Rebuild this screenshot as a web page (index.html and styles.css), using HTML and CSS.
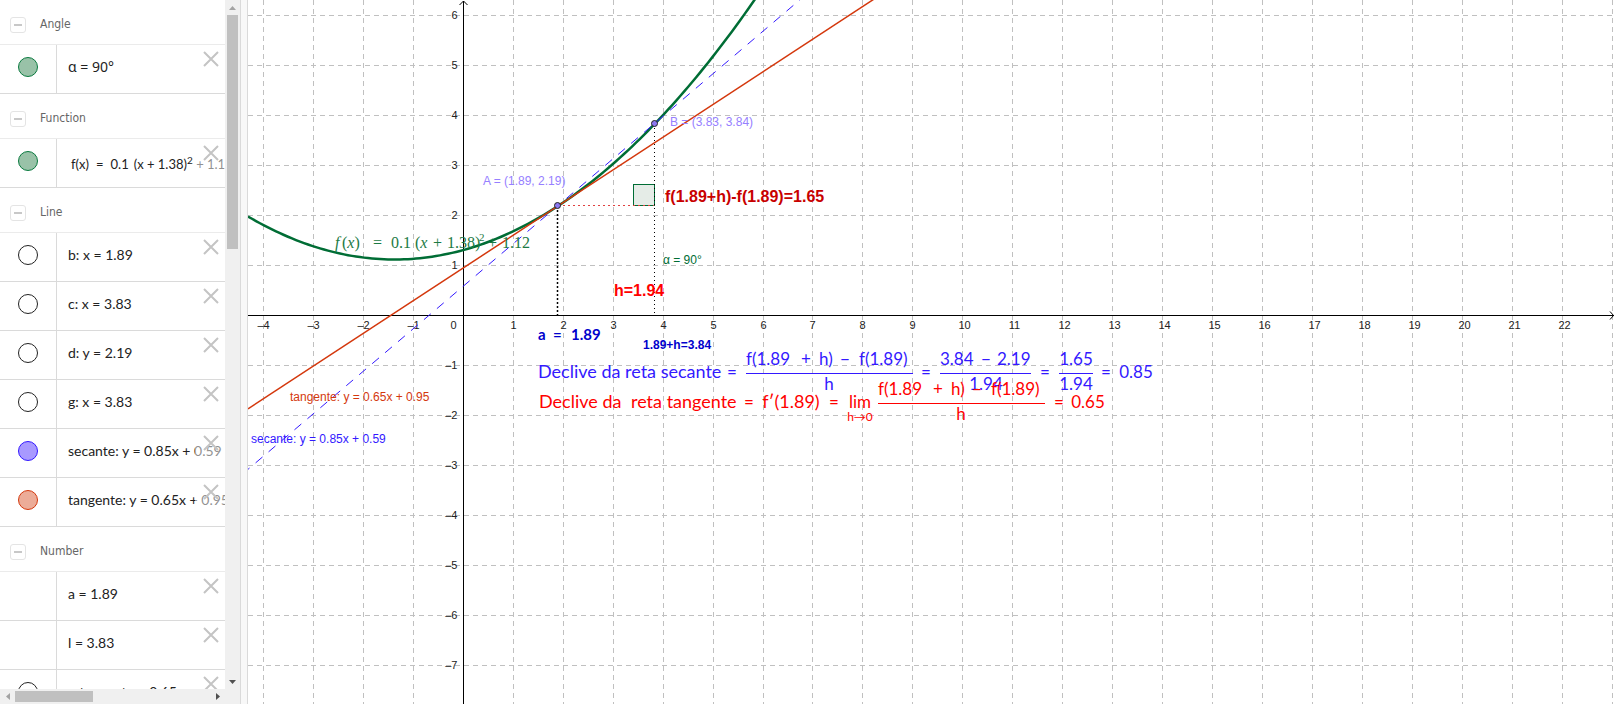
FILE: index.html
```html
<!DOCTYPE html>
<html lang="pt">
<head>
<meta charset="utf-8">
<title>Declive da reta tangente</title>
<link rel="stylesheet" href="styles.css">
</head>
<body>
<svg class="defs" width="0" height="0" aria-hidden="true">
  <symbol id="close" viewBox="0 0 16 16"><path d="M1 1L15 15M15 1L1 15" fill="none" stroke="#c4c4c4" stroke-width="2"/></symbol>
</svg>
<main class="app">
  <aside class="algebra">
    <div class="list">
      <section>
        <h2 class="group"><button class="toggle" aria-label="Collapse Angle"></button>Angle</h2>
        <div class="row"><div class="mark"><button class="dot green" aria-label="Toggle α"></button></div><div class="expr alpha">α = 90°</div><button class="del" aria-label="Delete"><svg><use href="#close"/></svg></button></div>
      </section>
      <section>
        <h2 class="group"><button class="toggle" aria-label="Collapse Function"></button>Function</h2>
        <div class="row"><div class="mark"><button class="dot green" aria-label="Toggle f"></button></div><div class="expr func"><span>f(x)</span><span>=</span><span>0.1</span><span class="tight">(x + 1.38)<sup>2</sup> + 1.12</span></div><button class="del" aria-label="Delete"><svg><use href="#close"/></svg></button></div>
      </section>
      <section>
        <h2 class="group"><button class="toggle" aria-label="Collapse Line"></button>Line</h2>
        <div class="row"><div class="mark"><button class="dot" aria-label="Toggle b"></button></div><div class="expr">b: x = 1.89</div><button class="del" aria-label="Delete"><svg><use href="#close"/></svg></button></div>
        <div class="row"><div class="mark"><button class="dot" aria-label="Toggle c"></button></div><div class="expr">c: x = 3.83</div><button class="del" aria-label="Delete"><svg><use href="#close"/></svg></button></div>
        <div class="row"><div class="mark"><button class="dot" aria-label="Toggle d"></button></div><div class="expr">d: y = 2.19</div><button class="del" aria-label="Delete"><svg><use href="#close"/></svg></button></div>
        <div class="row"><div class="mark"><button class="dot" aria-label="Toggle g"></button></div><div class="expr">g: x = 3.83</div><button class="del" aria-label="Delete"><svg><use href="#close"/></svg></button></div>
        <div class="row"><div class="mark"><button class="dot violet" aria-label="Toggle secante"></button></div><div class="expr">secante: y = 0.85x + 0.59</div><button class="del" aria-label="Delete"><svg><use href="#close"/></svg></button></div>
        <div class="row"><div class="mark"><button class="dot orange" aria-label="Toggle tangente"></button></div><div class="expr">tangente: y = 0.65x + 0.95</div><button class="del" aria-label="Delete"><svg><use href="#close"/></svg></button></div>
      </section>
      <section>
        <h2 class="group"><button class="toggle" aria-label="Collapse Number"></button>Number</h2>
        <div class="row"><div class="mark"></div><div class="expr">a = 1.89</div><button class="del" aria-label="Delete"><svg><use href="#close"/></svg></button></div>
        <div class="row"><div class="mark"></div><div class="expr">l = 3.83</div><button class="del" aria-label="Delete"><svg><use href="#close"/></svg></button></div>
        <div class="row"><div class="mark"><button class="dot" aria-label="Toggle mtangente"></button></div><div class="expr">mtangente = 0.65</div><button class="del" aria-label="Delete"><svg><use href="#close"/></svg></button></div>
      </section>
    </div>
    <div class="vbar">
      <button class="arrow" aria-label="Scroll up"><svg width="7" height="4"><path d="M0 4L3.500 0L7 4z" fill="#a3a3a3"/></svg></button>
      <div class="track"><div class="thumb"></div></div>
      <button class="arrow" aria-label="Scroll down"><svg width="7" height="4"><path d="M0 0L3.500 4L7 0z" fill="#505050"/></svg></button>
    </div>
    <div class="hbar">
      <button class="arrow" aria-label="Scroll left"><svg width="4" height="7"><path d="M4 0L0 3.500L4 7z" fill="#a3a3a3"/></svg></button>
      <div class="track"><div class="thumb"></div></div>
      <button class="arrow" aria-label="Scroll right"><svg width="4" height="7"><path d="M0 0L4 3.500L0 7z" fill="#505050"/></svg></button>
    </div>
  </aside>
  <div class="splitter"></div>
  <svg class="plot" id="plot" role="img" aria-label="Gráfico">
    <g id="grid" class="grid"></g>
    <g id="axes" class="axes"></g>
    <g id="ticks" class="ticks"></g>
    <rect class="right-angle" x="385.500" y="184.500" width="21" height="21"/>
    <path class="run" d="M310 205.500H406"/>
    <path class="drop-a" d="M309.500 206V315"/>
    <path class="drop-b" d="M406.500 124V315"/>
    <path id="curve" class="curve"/>
    <path id="secant" class="secant"/>
    <path id="tangent" class="tangent"/>
    <circle class="point" cx="309.500" cy="205.500" r="3"/>
    <circle class="point" cx="406.500" cy="123.500" r="3"/>

    <g class="label">
      <text class="c-point" x="235" y="185">A = (1.89, 2.19)</text>
      <text class="c-point" x="422" y="126">B = (3.83, 3.84)</text>
      <text class="c-green" x="415" y="264">α = 90°</text>
      <text class="c-orange" x="42" y="401">tangente: y = 0.65x + 0.95</text>
      <text class="c-blue" x="3" y="443">secante: y = 0.85x + 0.59</text>
      <text class="c-navy strong" x="395" y="349">1.89+h=3.84</text>
    </g>
    <g class="label-lg">
      <text class="c-red" x="366" y="296">h=1.94</text>
      <text class="c-dark-red" x="417" y="202">f(1.89+h)-f(1.89)=1.65</text>
    </g>
    <text class="fx" y="248"><tspan x="87" class="it">f</tspan><tspan x="94">(</tspan><tspan class="it">x</tspan>)<tspan x="125">=</tspan><tspan x="143">0.1</tspan><tspan x="167">(</tspan><tspan class="it">x</tspan><tspan x="185">+</tspan><tspan x="199">1.38)</tspan><tspan x="231" dy="-7" class="exp">2</tspan><tspan x="240" dy="7">+</tspan><tspan x="254">1.12</tspan></text>
    <text class="slider-value" y="340"><tspan x="290">a</tspan><tspan x="305">=</tspan><tspan x="323">1.89</tspan></text>

    <g class="math c-blue">
      <text x="290" y="378" class="prose">Declive da reta secante</text>
      <text x="484" y="378" class="mid">=</text>
      <text y="365"><tspan x="498">f(1.89</tspan><tspan x="553">+</tspan><tspan x="571">h)</tspan><tspan x="592">−</tspan><tspan x="611">f(1.89)</tspan></text>
      <path d="M498 373.500H665"/>
      <text x="581" y="390" class="mid">h</text>
      <text x="678" y="378" class="mid">=</text>
      <text y="365"><tspan x="692">3.84</tspan><tspan x="733">−</tspan><tspan x="749">2.19</tspan></text>
      <path d="M692 373.500H783"/>
      <text x="738" y="390" class="mid">1.94</text>
      <text x="797" y="378" class="mid">=</text>
      <text x="828" y="365" class="mid">1.65</text>
      <path d="M811 373.500H845"/>
      <text x="828" y="390" class="mid">1.94</text>
      <text x="858" y="378" class="mid">=</text>
      <text x="888" y="378" class="mid">0.85</text>
    </g>
    <g class="math c-red">
      <text x="291" y="408" class="prose">Declive da</text>
      <text x="383" y="408" class="prose">reta tangente</text>
      <text x="501" y="408" class="mid">=</text>
      <text x="543" y="408" class="mid prose">f′(1.89)</text>
      <text x="586" y="408" class="mid">=</text>
      <text x="612" y="408" class="mid">lim</text>
      <text x="612" y="421" class="mid sub">h→0</text>
      <text y="395"><tspan x="630">f(1.89</tspan><tspan x="685">+</tspan><tspan x="703">h)</tspan><tspan x="724">−</tspan><tspan x="743">f(1.89)</tspan></text>
      <path d="M630 403.500H797"/>
      <text x="713" y="420" class="mid">h</text>
      <text x="811" y="408" class="mid">=</text>
      <text x="840" y="408" class="mid">0.65</text>
    </g>
  </svg>
</main>
<script src="plot.js"></script>
</body>
</html>
```

FILE: styles.css
```css
* { box-sizing: border-box; }
body { margin: 0; background: #fff; font-family: "Liberation Sans", Arial, sans-serif; }
button { padding: 0; border: 0; background: none; font: inherit; }
.defs { position: absolute; }
.app { display: flex; height: 100vh; padding: 0 2px 2px 0; }

.algebra {
  flex: none;
  display: grid;
  grid-template: minmax(0, 1fr) 15px / 225px 15px;
  background: #f0f0f0;
}
.list { overflow: hidden; background: #fff; }
.group {
  display: flex;
  align-items: center;
  gap: 14px;
  height: 45px;
  margin: 0;
  padding: 4px 10px 0;
  border-bottom: 1px solid #ebebeb;
  color: #666;
  font: 12px "DejaVu Sans Condensed", "DejaVu Sans", sans-serif;
}
.toggle {
  display: grid;
  place-items: center;
  width: 16px;
  height: 16px;
  margin-top: 2px;
  border: 1px solid #e4e4e4;
  border-radius: 3px;
}
.toggle::before { content: ""; width: 8px; height: 2px; background: #c8c8c8; }
.row {
  position: relative;
  display: flex;
  height: 49px;
  border-bottom: 1px solid #dadada;
  overflow: hidden;
}
.mark {
  flex: none;
  display: flex;
  justify-content: center;
  align-items: flex-start;
  width: 57px;
  padding-top: 12px;
  border-right: 1px solid #dadada;
}
.dot { width: 20px; height: 20px; border: 1px solid #222; border-radius: 50%; background: #fff; }
.dot.green { border-color: #0a7a3f; background: #99c2a8; }
.dot.violet { border-color: #3319ff; background: #a899ff; }
.dot.orange { border-color: #d4380d; background: #ecac98; }
.expr {
  padding: 12px 0 0 11px;
  color: #222;
  font: 14px/20px Lato, sans-serif;
  white-space: nowrap;
}
.expr.alpha { font-family: "Noto Sans", sans-serif; }
.expr.func { display: flex; gap: 7px; padding: 15px 0 0 14px; font-size: 13px; }
.func .tight { margin-left: -2px; }
.func sup { font-size: 10px; line-height: 1px; }
.del {
  position: absolute;
  top: 0;
  right: 0;
  display: flex;
  align-items: flex-start;
  width: 30px;
  height: 48px;
  padding: 6px 6px 0 8px;
  background: rgba(255, 255, 255, 0.5);
}
.del svg { flex: none; width: 16px; height: 16px; }

.vbar { display: flex; flex-direction: column; }
.hbar { display: flex; }
.arrow { flex: none; display: grid; place-items: center; width: 15px; height: 15px; }
.track { flex: 1; min-width: 0; min-height: 0; }
.thumb { background: #c0c0c0; }
.vbar .thumb { height: 35.5%; margin: 0 2px; }
.hbar .track { padding: 2px 0; }
.hbar .thumb { width: 40%; height: 100%; }
.splitter { flex: none; width: 8px; border: solid #dadada; border-width: 0 1px; background: #f8f8f8; }

.plot { flex: 1; min-width: 0; height: 100%; overflow: hidden; }
.grid { fill: none; stroke: #c0c0c0; stroke-width: 1; stroke-dasharray: 5 4; }
.axes { fill: none; stroke: #000; }
.ticks { font-size: 11px; fill: #222; }
.curve { fill: none; stroke: #006d35; stroke-width: 2.5; }
.secant { stroke: #3319ff; stroke-dasharray: 9 8; stroke-dashoffset: 7; }
.tangent { stroke: #d4380d; stroke-width: 1.5; }
.right-angle { fill: #e5ece7; stroke: #006d35; }
.run { stroke: #e04040; stroke-dasharray: 2 3; }
.drop-a { stroke: #000; stroke-width: 1.5; stroke-dasharray: 2 2; }
.drop-b { stroke: #000; stroke-dasharray: 1 3; }
.point { fill: #8c78f0; stroke: #222; }
.label { font-size: 12px; }
.strong { font-weight: bold; }
.label-lg { font-size: 16px; font-weight: bold; }
.c-point { fill: #9680ff; }
.c-green { fill: #006d35; }
.c-orange { fill: #d4380d; }
.c-blue { fill: #3319ff; stroke: #3319ff; }
.c-navy { fill: #0000cc; }
.c-red { fill: #ff0000; stroke: #ff0000; }
.c-dark-red { fill: #c80000; }
.plot text { stroke: none; }
.fx { fill: #1c7a44; font: 16px "Liberation Serif", serif; }
.it { font-style: italic; }
.exp { font-size: 11px; }
.slider-value { fill: #0000cc; font: bold 15px Lato, sans-serif; }
.math { font: 17px Lato, sans-serif; }
.prose { font-size: 18px; }
.mid { text-anchor: middle; }
.sub { font-size: 12px; }
```

FILE: plot.js
```js
const NS = 'http://www.w3.org/2000/svg';
const ORIGIN = { x: 215.5, y: 315.5 };
const UNIT = { x: 49.957, y: 50 };
const plot = document.getElementById('plot');
const layer = id => document.getElementById(id);

const gridX = n => ORIGIN.x + Math.floor(n * UNIT.x + 0.3);
const gridY = n => ORIGIN.y - n * UNIT.y;
const py = y => ORIGIN.y - y * UNIT.y;

function add(parent, name, attrs, text) {
  const el = document.createElementNS(NS, name);
  for (const key in attrs) el.setAttribute(key, attrs[key]);
  if (text !== undefined) el.textContent = text;
  parent.appendChild(el);
}

function sample(fn, width, step) {
  const points = [];
  for (let x = 0; x <= width; x += step) {
    points.push(x + ' ' + py(fn((x - ORIGIN.x) / UNIT.x)).toFixed(2));
  }
  return 'M' + points.join('L');
}

function line(fn, width) {
  return sample(fn, width, width);
}

const label = n => (n < 0 ? '–' : '') + Math.abs(n);

function draw() {
  const { width, height } = plot.getBoundingClientRect();
  const grid = layer('grid'), axes = layer('axes'), ticks = layer('ticks');
  [grid, axes, ticks].forEach(g => g.replaceChildren());

  for (let n = Math.ceil(-ORIGIN.x / UNIT.x); gridX(n) < width; n++) {
    if (n !== 0) add(grid, 'path', { d: `M${gridX(n)} 0V${height}` });
    if (gridX(n) + 12 > width) continue;
    const shift = n === 0 ? -10 : n > 9 ? 2 : 0;
    add(ticks, 'text', { x: gridX(n) + shift, y: 329, 'text-anchor': 'middle' }, label(n));
  }
  for (let n = Math.floor(ORIGIN.y / UNIT.y); gridY(n) < height; n--) {
    if (n === 0) continue;
    add(grid, 'path', { d: `M0 ${gridY(n)}H${width}` });
    add(ticks, 'text', { x: ORIGIN.x - 6, y: gridY(n) + 3.5, 'text-anchor': 'end' }, label(n));
  }
  add(axes, 'path', { d: `M0 ${ORIGIN.y}H${width}M${width - 4} ${ORIGIN.y - 4}L${width - 0.5} ${ORIGIN.y}L${width - 4} ${ORIGIN.y + 4}` });
  add(axes, 'path', { d: `M${ORIGIN.x} 1V${height}M${ORIGIN.x - 4} 5L${ORIGIN.x} 1L${ORIGIN.x + 4} 5` });

  layer('curve').setAttribute('d', sample(x => 0.1 * (x + 1.38) ** 2 + 1.12, width, 4));
  layer('secant').setAttribute('d', line(x => 0.85 * x + 0.59, width));
  layer('tangent').setAttribute('d', line(x => 0.654 * x + 0.954, width));
}

draw();
window.addEventListener('resize', draw);
```
